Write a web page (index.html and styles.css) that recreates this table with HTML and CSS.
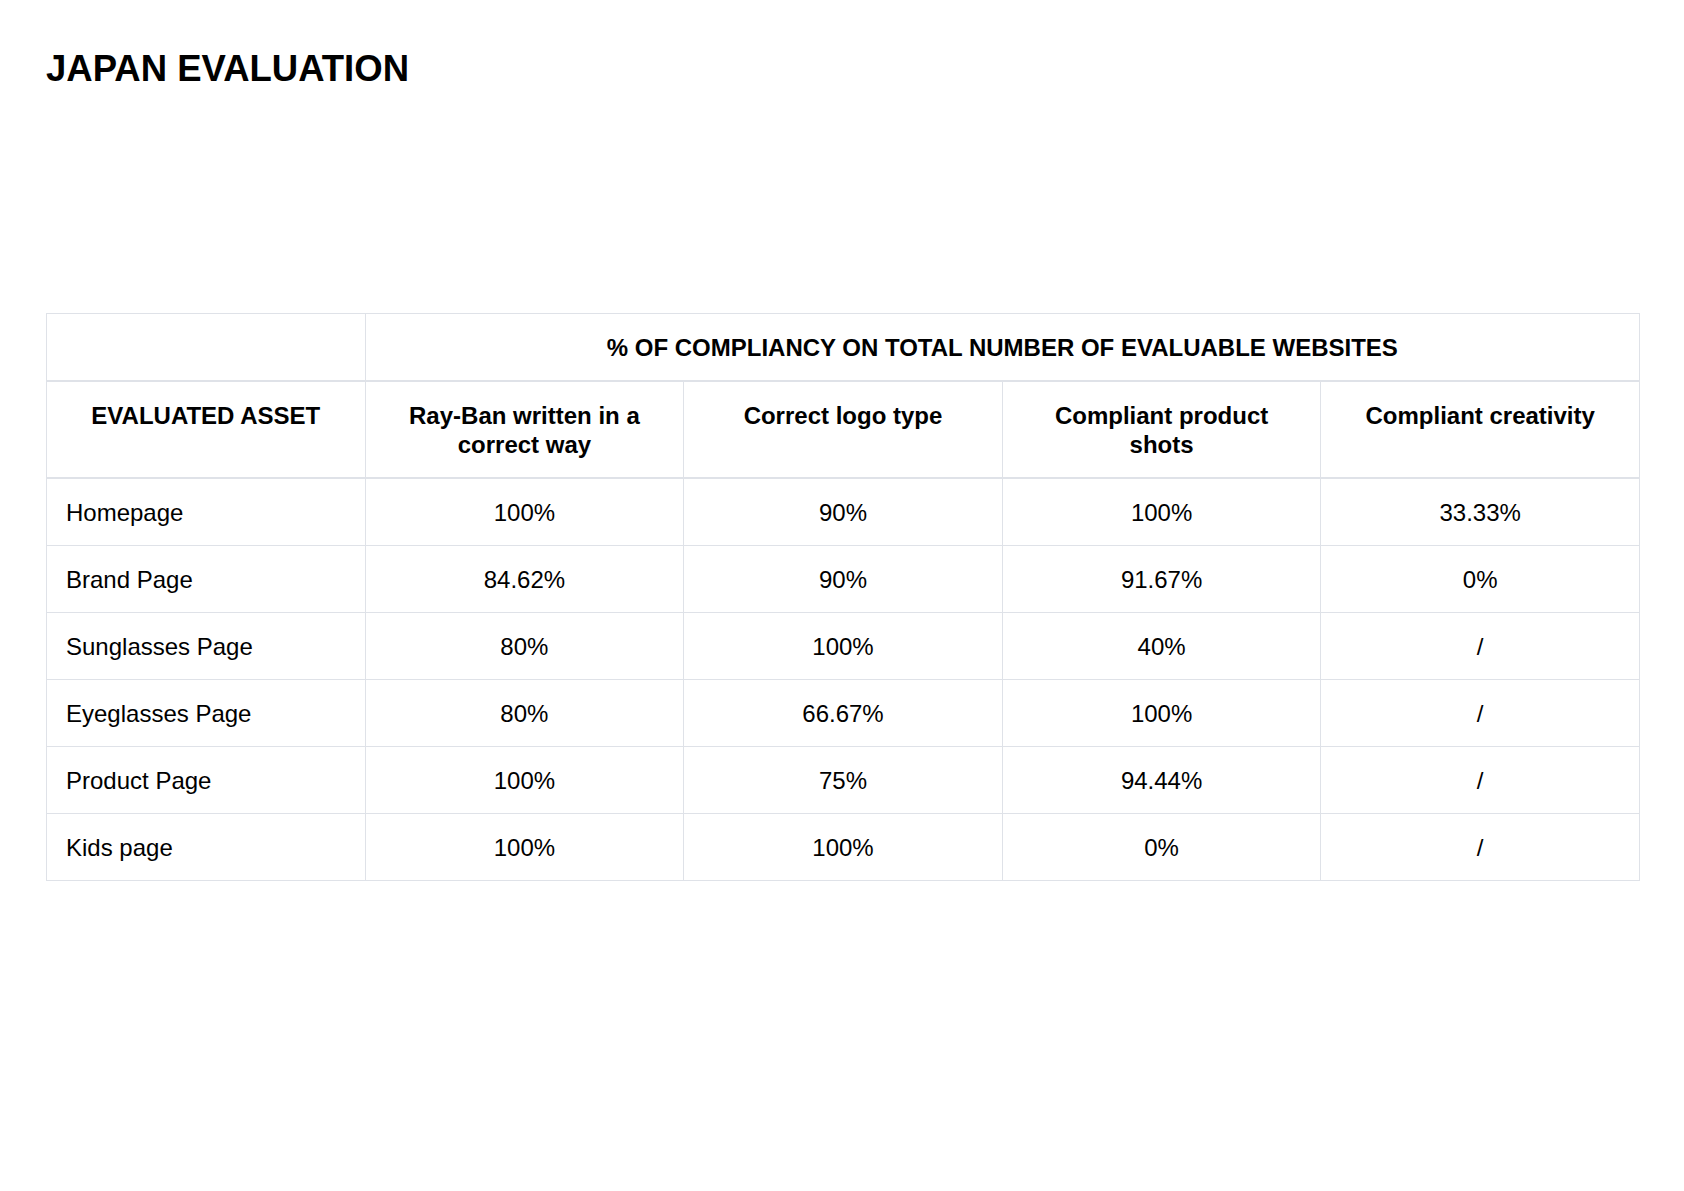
FILE: index.html
```html
<!DOCTYPE html>
<html lang="en">
<head>
<meta charset="utf-8">
<title>Japan Evaluation</title>
<link rel="stylesheet" href="styles.css">
</head>
<body>
<main class="page">
  <h1 class="title">JAPAN EVALUATION</h1>
  <table class="eval">
    <colgroup>
      <col class="c"><col class="c"><col class="c"><col class="c"><col class="c">
    </colgroup>
    <thead>
      <tr class="h1row">
        <th></th>
        <th colspan="4">% OF COMPLIANCY ON TOTAL NUMBER OF EVALUABLE WEBSITES</th>
      </tr>
      <tr class="h2row">
        <th>EVALUATED ASSET</th>
        <th>Ray-Ban written in a<br>correct way</th>
        <th>Correct logo type</th>
        <th>Compliant product<br>shots</th>
        <th>Compliant creativity</th>
      </tr>
    </thead>
    <tbody>
      <tr><td class="name">Homepage</td><td>100%</td><td>90%</td><td>100%</td><td>33.33%</td></tr>
      <tr><td class="name">Brand Page</td><td>84.62%</td><td>90%</td><td>91.67%</td><td>0%</td></tr>
      <tr><td class="name">Sunglasses Page</td><td>80%</td><td>100%</td><td>40%</td><td>/</td></tr>
      <tr><td class="name">Eyeglasses Page</td><td>80%</td><td>66.67%</td><td>100%</td><td>/</td></tr>
      <tr><td class="name">Product Page</td><td>100%</td><td>75%</td><td>94.44%</td><td>/</td></tr>
      <tr><td class="name">Kids page</td><td>100%</td><td>100%</td><td>0%</td><td>/</td></tr>
    </tbody>
  </table>
</main>
</body>
</html>
```
FILE: styles.css
```css
html, body {
  margin: 0;
  padding: 0;
  background: #ffffff;
}
body {
  font-family: "Liberation Sans", Arial, sans-serif;
  color: #000000;
}
.page {
  padding: 47px 44px 0 46px;
}
.title {
  margin: 0;
  font-size: 36.5px;
  line-height: 44px;
  font-weight: 700;
}
.eval {
  margin-top: 222px;
  width: 100%;
  table-layout: fixed;
  border-collapse: collapse;
  font-size: 24px;
  line-height: 29px;
}
.eval col.c {
  width: 20%;
}
.eval th,
.eval td {
  border: 1px solid #dfe2e8;
  padding: 19px 19px 18px;
  text-align: center;
  vertical-align: top;
}
.eval th {
  font-weight: 700;
}
.eval thead tr th {
  border-bottom-width: 2px;
}
.eval td.name {
  text-align: left;
}
```
